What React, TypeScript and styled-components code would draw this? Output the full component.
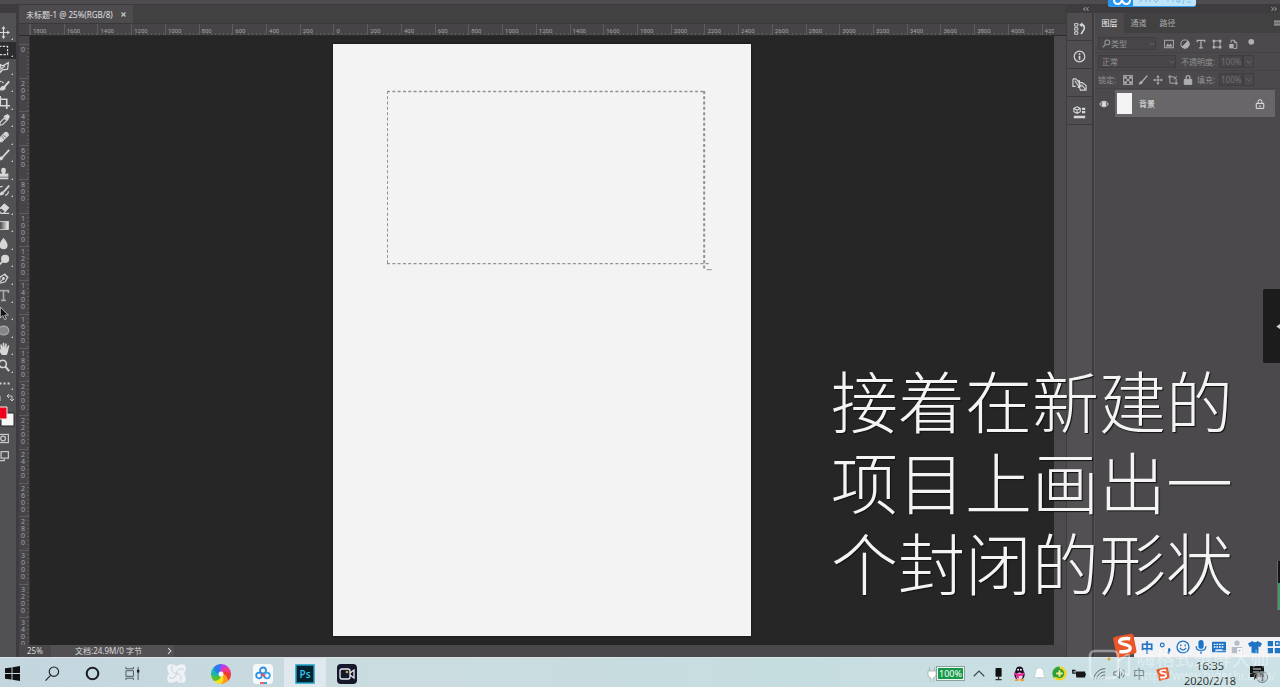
import React from "react";
import styled, { createGlobalStyle } from "styled-components";

const Global = createGlobalStyle`
  * { box-sizing: border-box; }
  html, body { margin: 0; padding: 0; }
  body { overflow: hidden; background: #262626; font-family: "Noto Sans", "Noto Sans CJK SC", sans-serif; }
  button, input, select { font: inherit; color: inherit; margin: 0; padding: 0; border: 0; background: none; }
  svg { display: block; flex: none; }
`;

const Screen = styled.div`
  position: relative;
  display: flex;
  flex-direction: column;
  height: 100vh;
  overflow: hidden;
`;

const TopStrip = styled.header`
  height: 5px;
  flex: none;
  background: #4e4c4f;
  border-bottom: 1px solid #3c3a3c;
`;

const Workspace = styled.main`
  flex: 1;
  min-height: 0;
  display: flex;
  background: #3e3c3e;
`;

/* ---------- tool column ---------- */

const Tools = styled.nav`
  width: 16px;
  flex: none;
  margin-top: 8px;
  padding-top: 11px;
  background: #515052;
  display: flex;
  flex-direction: column;
  overflow: hidden;
`;

const ToolList = styled.div`
  height: 368px;
  display: flex;
  flex-direction: column;
`;

const ToolButton = styled.button<{ $active?: boolean }>`
  position: relative;
  flex: 1;
  min-height: 0;
  width: 16px;
  display: flex;
  align-items: center;
  overflow: hidden;
  color: #d6d6d6;
  background: ${(p) => (p.$active ? "#2c2b2d" : "transparent")};
  svg { margin-left: -3px; }
  &::after {
    content: "";
    position: absolute;
    right: 3px;
    bottom: 2px;
    border-left: 2px solid transparent;
    border-bottom: 2px solid #c8c8c8;
  }
`;

const SmallTool = styled.button`
  height: 18px;
  width: 16px;
  display: flex;
  align-items: center;
  color: #c8c8c8;
  overflow: hidden;
  svg { margin-left: -3px; }
`;

const SwapButton = styled(SmallTool)`
  height: 12px;
  svg { margin-left: 0; }
`;

const Swatches = styled.div`
  height: 25px;
  svg { width: 16px; height: 25px; }
`;

/* ---------- document ---------- */

const Document = styled.section`
  flex: 1;
  min-width: 0;
  margin-left: 3px;
  display: flex;
  flex-direction: column;
  background: #4a484b;
`;

const TabBar = styled.div`
  height: 19px;
  flex: none;
  display: flex;
  background: #424142;
  border-bottom: 1px solid #3a393a;
`;

const DocTab = styled.div`
  width: 114px;
  padding: 1px 6px 0 7px;
  display: flex;
  align-items: center;
  justify-content: space-between;
  background: #4d4b4e;
  color: #e0e0e0;
  font-size: 8px;
  line-height: 18px;
  white-space: nowrap;
`;

const CloseButton = styled.button`
  width: 6px;
  height: 18px;
  color: #c4c4c4;
  display: flex;
  align-items: center;
`;

const RulerRow = styled.div`
  height: 12px;
  flex: none;
  display: flex;
  background: #464447;
  border-bottom: 1px solid #2c2b2c;
`;

const RulerCorner = styled.div`
  width: 11px;
  flex: none;
  border-right: 1px solid #59575a;
`;

const TopRuler = styled.div`
  flex: 1;
  min-width: 0;
  margin-right: 12px;
  display: flex;
  overflow: hidden;
`;

const TopMark = styled.div<{ $last?: boolean }>`
  flex: ${(p) => (p.$last ? 3 : 10)} 1 0;
  min-width: 0;
  overflow: hidden;
  padding-left: 2px;
  border-left: 1px solid #5e5c5f;
  background: repeating-linear-gradient(90deg, transparent 0 3px, #5d5b5e 3px 4px) left bottom / 100% 2px no-repeat;
  color: #a3a2a4;
  font-family: Roboto, "Open Sans", sans-serif;
  font-size: 6px;
  line-height: 13px;
`;

const CanvasRow = styled.div`
  flex: 1;
  min-height: 0;
  display: flex;
`;

const SideRuler = styled.div`
  width: 11px;
  flex: none;
  padding-top: 8px;
  background: #464447;
  border-right: 1px solid #353435;
  display: flex;
  flex-direction: column;
  overflow: hidden;
`;

const SideMark = styled.div<{ $last?: boolean }>`
  flex: ${(p) => (p.$last ? 8 : 10)} 1 0;
  min-height: 0;
  overflow: hidden;
  padding: 1px 0 0 1px;
  border-top: 1px solid #5e5c5f;
  background: repeating-linear-gradient(180deg, transparent 0 3px, #5d5b5e 3px 4px) right top / 2px 100% no-repeat;
  color: #a3a2a4;
  font-size: 7px;
  line-height: 7px;
  span { display: block; width: 6px; text-align: center; }
`;

const Canvas = styled.div`
  flex: 1;
  min-width: 0;
  padding: 8px 0 9px;
  background: #262626;
  display: flex;
  justify-content: center;
`;

const Page = styled.div`
  position: relative;
  height: 100%;
  aspect-ratio: 418 / 592;
  background: #f3f3f3;
  box-shadow: 0 0 2px #0d0d0d;
`;

const Marquee = styled.svg`
  position: absolute;
  left: 13%;
  top: 8%;
  width: 76%;
  height: 29%;
  overflow: visible;
`;

const ScrollTrack = styled.div`
  width: 12px;
  flex: none;
  background: #4c4a4d;
`;

const StatusBar = styled.footer`
  height: 12px;
  flex: none;
  display: flex;
  color: #dadada;
  font-size: 8px;
  line-height: 12px;
  background: #4a484b;
`;

const Zoom = styled.span`
  width: 32px;
  padding-left: 8px;
`;

const DocInfo = styled.span`
  width: 123px;
  padding: 0 1px 0 24px;
  display: flex;
  justify-content: space-between;
  background: #525053;
`;

/* ---------- icon dock ---------- */

const Dock = styled.aside`
  width: 28px;
  flex: none;
  padding: 0 2px 0 1px;
  display: flex;
  flex-direction: column;
`;

const DockHead = styled.div`
  height: 8px;
  flex: none;
  padding-right: 3px;
  display: flex;
  align-items: center;
  justify-content: flex-end;
  color: #c0c0c0;
`;

const DockButton = styled.button`
  height: 28px;
  flex: none;
  padding-top: 3px;
  background: #4f4d50;
  border-bottom: 1px solid #3c3b3d;
  display: flex;
  align-items: center;
  justify-content: center;
  color: #d6d6d6;
`;

const DockFill = styled.div`
  flex: 1;
  background: #525053;
`;

/* ---------- layers panel ---------- */

const Panel = styled.aside`
  width: 186px;
  flex: none;
  display: flex;
  flex-direction: column;
`;

const PanelBody = styled.div`
  flex: 1;
  background: #4b494c;
  border-left: 1px solid #555356;
`;

const PanelTabs = styled.div`
  height: 20px;
  margin-bottom: 2px;
  display: flex;
  align-items: stretch;
  background: #424142;
`;

const PanelTab = styled.button<{ $active?: boolean }>`
  width: 29px;
  font-size: 8px;
  line-height: 18px;
  color: ${(p) => (p.$active ? "#f0f0f0" : "#a9a8aa")};
  background: ${(p) => (p.$active ? "#4b494c" : "transparent")};
`;

const MenuButton = styled.button`
  margin-left: auto;
  width: 6px;
  display: flex;
  align-items: center;
  color: #a5a5a5;
`;

const ControlRow = styled.div`
  height: 18px;
  padding-left: 3px;
  display: flex;
  align-items: center;
  color: #949395;
  font-size: 8px;
  line-height: 12px;
  border-bottom: 1px solid #454346;
`;

const Field = styled.div<{ $width: number; $gap?: number }>`
  width: ${(p) => p.$width}px;
  height: 13px;
  margin-right: ${(p) => p.$gap || 0}px;
  padding-left: 3px;
  display: flex;
  align-items: center;
  background: #474548;
  border: 1px solid #3f3d40;
`;

const Pick = styled.select`
  appearance: none;
  flex: 1;
  min-width: 0;
  height: 11px;
  line-height: 11px;
`;

const FieldLabel = styled.label<{ $width: number }>`
  width: ${(p) => p.$width}px;
  flex: none;
  white-space: nowrap;
`;

const Amount = styled.input`
  width: 24px;
  height: 13px;
  padding-left: 1px;
  color: #727073;
  background: #474548;
  border: 1px solid #3f3d40;
`;

const Step = styled.button`
  width: 11px;
  height: 13px;
  border: 1px solid #3f3d40;
  display: flex;
  align-items: center;
  justify-content: center;
`;

const IconGroup = styled.div<{ $slot: number }>`
  display: flex;
  color: #b0afb1;
  button {
    width: ${(p) => p.$slot}px;
    height: 14px;
    display: flex;
    align-items: center;
    justify-content: center;
  }
`;

const LayerRow = styled.div`
  height: 27px;
  margin-top: 1px;
  padding-right: 5px;
  display: flex;
`;

const EyeButton = styled.button`
  width: 20px;
  padding-right: 2px;
  display: flex;
  align-items: center;
  justify-content: center;
  color: #e0e0e0;
`;

const LayerItem = styled.div`
  flex: 1;
  padding: 0 10px 0 2px;
  display: flex;
  align-items: center;
  background: #686669;
  color: #ececec;
  font-size: 8px;
`;

const Thumb = styled.span`
  width: 15px;
  height: 21px;
  margin-right: 7px;
  background: #f4f4f4;
`;

const LayerName = styled.span`
  flex: 1;
`;

/* ---------- overlays ---------- */

const ShareTag = styled.div`
  position: absolute;
  top: 0;
  right: 84px;
  width: 88px;
  height: 7px;
  display: flex;
  overflow: hidden;
  border-radius: 0 0 3px 3px;
  border-bottom: 1px solid #2f9df0;
  background: #bfe4fa;
  color: #79bdec;
`;

const SideFlap = styled.button`
  position: absolute;
  right: 0;
  top: 289px;
  width: 17px;
  height: 74px;
  border-radius: 2px 0 0 2px;
  background: #1c1c1c;
  color: #d0d0d0;
  display: flex;
  align-items: center;
  justify-content: flex-end;
`;

const LevelMeter = styled.div`
  position: absolute;
  right: 0;
  bottom: 77px;
  width: 3px;
  height: 49px;
  border-left: 1px solid #6c6a6d;
  background: linear-gradient(180deg, #151515 0 45%, #3f9a66 45% 100%);
`;

const Caption = styled.p`
  position: absolute;
  right: 47px;
  top: 358px;
  margin: 0;
  color: #f4f4f4;
  font-family: "Noto Sans CJK SC Light", "Noto Sans CJK SC", sans-serif;
  font-weight: 300;
  font-size: 67px;
  line-height: 81px;
  text-shadow: 1px 1px 1px #111;
  white-space: nowrap;
  span { display: block; }
`;

const ImeBar = styled.div`
  position: absolute;
  right: 0;
  bottom: 30px;
  width: 146px;
  height: 20px;
  padding-left: 4px;
  display: flex;
  overflow: hidden;
  background: #f2f2f4;
  color: #1d74c4;
`;

const ImeKey = styled.button<{ $muted?: boolean }>`
  width: 18px;
  flex: none;
  height: 20px;
  display: flex;
  align-items: center;
  justify-content: center;
  color: ${(p) => (p.$muted ? "#b4bccb" : "inherit")};
  font-family: "Noto Sans CJK SC", sans-serif;
  font-size: 13px;
  font-weight: 700;
  line-height: 20px;
`;

const ImeLogo = styled.div`
  position: absolute;
  right: 143px;
  bottom: 29px;
`;

const Watermark = styled.div`
  position: absolute;
  right: 4px;
  bottom: 5px;
  display: flex;
  align-items: center;
  gap: 6px;
  color: rgba(255, 255, 255, 0.42);
  pointer-events: none;
  p { margin: 0; white-space: nowrap; }
`;

const MarkName = styled.p`
  font-size: 19px;
  line-height: 20px;
`;

const MarkLink = styled.p`
  font-size: 12px;
  line-height: 13px;
`;

/* ---------- taskbar ---------- */

const Taskbar = styled.footer`
  height: 30px;
  flex: none;
  display: flex;
  justify-content: space-between;
  border-top: 1px solid #d9e3e6;
  background: linear-gradient(90deg, #c3d6de 0%, #cbdce0 30%, #c6dde0 60%, #cbe1e6 100%);
  color: #1b1f22;
`;

const Apps = styled.div`
  display: flex;
  margin-left: -8px;
`;

const AppButton = styled.button<{ $width: number; $active?: boolean }>`
  width: ${(p) => p.$width}px;
  padding-top: 2px;
  display: flex;
  align-items: center;
  justify-content: center;
  background: ${(p) => (p.$active ? "#dfe8ec" : "transparent")};
`;

const Tray = styled.div`
  display: flex;
  align-items: center;
  padding-top: 2px;
`;

const TrayButton = styled.button<{ $width?: number }>`
  width: ${(p) => p.$width || 20}px;
  height: 28px;
  display: flex;
  align-items: center;
  justify-content: center;
  color: #3c4548;
  font-size: 12px;
`;

const TrayMode = styled(TrayButton)`
  color: #6f7d82;
`;

const Battery = styled.div`
  width: 42px;
  display: flex;
  align-items: center;
  color: #fff;
`;

const Charge = styled.span`
  width: 27px;
  height: 13px;
  background: #169a4a;
  border: 1px solid #eef6f3;
  outline: 1px solid #8da09c;
  font-size: 9px;
  line-height: 11px;
  text-align: center;
`;

const Clock = styled.time`
  width: 59px;
  padding: 0 0 1px 7px;
  text-align: center;
  font-family: "Open Sans", sans-serif;
  font-size: 11px;
  line-height: 15px;
  white-space: nowrap;
  span { display: block; }
`;

/* ---------- drawings ---------- */

type IconProps = { size?: number; children: React.ReactNode; box?: number; height?: number };
const Icon = ({ size = 12, box = 16, height, children }: IconProps) => (
  <svg width={size} height={height || size} viewBox={`0 0 ${box} ${box}`} fill="none" stroke="currentColor" strokeWidth="1.5" aria-hidden="true">
    {children}
  </svg>
);

const SogouMark = ({ size }: { size: number }) => (
  <svg width={size} height={size} viewBox="0 0 24 24" aria-hidden="true">
    <path d="M1 5.5Q1 4 3 3.5L18 .6Q20 .3 20.500 2L23.500 17Q23.700 19 22 19.600L7 23.400Q5 23.700 4.500 22Z" fill="#e8562a" />
    <path d="M17.500 5.500Q8 4.500 7.200 8.200C6.800 11.500 17.500 10.500 17.500 14.500Q17.500 18.800 7 17.800" fill="none" stroke="#fff" strokeWidth="3.200" />
  </svg>
);

const tools: { name: string; art: React.ReactNode }[] = [
  { name: "移动", art: <><path d="M8 2v12M2 8h12" /><path d="M8 0l2.500 3.500h-5zM8 16l2.500-3.500h-5zM0 8l3.500-2.500v5zM16 8l-3.500-2.500v5z" fill="currentColor" stroke="none" /></> },
  { name: "矩形选框", art: <rect x="-2" y="3" width="15" height="10" strokeDasharray="3 1.500" /> },
  { name: "套索", art: <path d="M1 3l6 3 7-4-1 8-6 1-3 3-1-4zM4 4l1 6 5-4" /> },
  { name: "快速选择", art: <><path d="M15 3L8 11" strokeWidth="2.500" /><path d="M8 9q-3 0-4 4 5 1 6-2z" fill="currentColor" /><path d="M1 5q4-4 7 0" strokeDasharray="2 1" /></> },
  { name: "裁剪", art: <path d="M4 0v12h12M0 4h12v12" strokeWidth="2" /> },
  { name: "吸管", art: <><path d="M3 14l1-4 5-5 3 3-5 5z" /><path d="M9 3l4 4 2-4-2-2z" fill="currentColor" /></> },
  { name: "修复画笔", art: <><path d="M2 10l8-8q3-1 4 3l-8 8q-4 1-4-3z" fill="currentColor" /><path d="M6 7l3 3M8 5l3 3" stroke="#515052" strokeDasharray="1 1" /></> },
  { name: "画笔", art: <><path d="M15 1L7 10" strokeWidth="2.200" /><path d="M6 9q-3 0-5 5 6 1 7-3z" fill="currentColor" stroke="none" /></> },
  { name: "仿制图章", art: <path d="M8 1a3 3 0 0 1 3 3q0 2-1.500 4H14v4H2V8h4.500Q5 6 5 4a3 3 0 0 1 3-3zM2 13h12v2H2z" fill="currentColor" stroke="none" /> },
  { name: "历史画笔", art: <><path d="M15 2L8 10" strokeWidth="2.200" /><path d="M7 9q-3 0-4 5 5 0 6-3z" fill="currentColor" stroke="none" /><path d="M1 8q0-5 6-5M10 14q4-1 4-5" /></> },
  { name: "橡皮擦", art: <><path d="M2 10l7-7 5 4-6 7H5z" /><path d="M5 7l5 4 4-4-5-4z" fill="currentColor" /><path d="M8 14h7" /></> },
  { name: "渐变", art: <><defs><linearGradient id="toolGradient"><stop stopColor="#222" /><stop offset="1" stopColor="#f2f2f2" /></linearGradient></defs><rect x="1" y="3" width="13" height="10" fill="url(#toolGradient)" strokeWidth="1" /></> },
  { name: "模糊", art: <path d="M8 1q5 6 5 9a5 5 0 0 1-10 0q0-3 5-9z" fill="currentColor" stroke="none" /> },
  { name: "减淡", art: <><circle cx="10" cy="6" r="5" fill="currentColor" stroke="none" /><path d="M7 9l-6 6" strokeWidth="2" /></> },
  { name: "钢笔", art: <><path d="M2 14l2-8 5-3 4 4-3 5z" /><path d="M2 14l5-5M9 2l5 5" /><circle cx="8" cy="8" r="1" fill="currentColor" /></> },
  { name: "文字", art: <path d="M2 5V2h12v3M8 2v12M5 14h6" strokeWidth="2" stroke="#a9a8aa" /> },
  { name: "路径选择", art: <path d="M4 0l10 10H9.500l2 4.500-2 1-2.500-5-3 3z" fill="#141414" strokeWidth="1" /> },
  { name: "椭圆", art: <ellipse cx="8" cy="8" rx="6.500" ry="5.500" fill="#858486" stroke="#a9a8aa" /> },
  { name: "抓手", art: <path d="M6 16L2 10Q.5 8 2 7.500q1 0 2.500 2L4 3.500q.8-1.500 2 0L7 7V1.500q1-1.500 2 0V7l1.200-5q1.300-1 1.800.5L11.500 8 13.500 4q1.500-.5 1.500 1L13.500 12 12 16z" fill="currentColor" stroke="none" /> },
  { name: "缩放", art: <><circle cx="7" cy="6" r="4.500" strokeWidth="2" /><path d="M10 9l5 6" strokeWidth="2.500" /></> },
  { name: "更多", art: <path d="M3 8h2.500M8 8h2.500M13 8h2.500" strokeWidth="2.500" /> },
];

const topMarks = [1800, 1600, 1400, 1200, 1000, 800, 600, 400, 200, 0, 200, 400, 600, 800, 1000, 1200, 1400, 1600, 1800, 2000, 2200, 2400, 2600, 2800, 3000, 3200, 3400, 3600, 3800, 4000, 420];
const sideMarks = Array.from({ length: 18 }, (_, i) => String(i * 200));

const Chevron = () => <Icon size={6} box={10}><path d="M1 3l4 4 4-4" stroke="#6b696c" /></Icon>;

const ToolColumn = () => (
  <Tools aria-label="工具">
    <ToolList>
      {tools.map((t, i) => (
        <ToolButton key={t.name} $active={i === 1} aria-label={t.name}><Icon size={13}>{t.art}</Icon></ToolButton>
      ))}
    </ToolList>
    <SwapButton aria-label="切换颜色">
      <svg width="16" height="12" viewBox="0 0 16 12" fill="none" stroke="currentColor"><path d="M0 4v5M8 4h4v5M9 2L7 4l2 2M10 7l2 2 2-2" /></svg>
    </SwapButton>
    <Swatches>
      <svg viewBox="0 0 16 25"><path d="M1 9h13v13H1z" fill="#f7f7f7" stroke="#222" /><path d="M-1 3h8v12h-8z" fill="#f0001c" stroke="#eee" /></svg>
    </Swatches>
    <SmallTool aria-label="快速蒙版"><Icon size={13}><rect x="1" y="3" width="13" height="10" /><circle cx="7.500" cy="8" r="3" /></Icon></SmallTool>
    <SmallTool aria-label="屏幕模式"><Icon size={13}><rect x="5" y="2" width="9" height="8" /><path d="M4 6H1v7h8v-2" /></Icon></SmallTool>
  </Tools>
);

const DocumentArea = () => (
  <Document>
    <TabBar>
      <DocTab>
        <span>未标题-1 @ 25%(RGB/8)</span>
        <CloseButton aria-label="关闭"><Icon size={5} box={10}><path d="M1 1l8 8M9 1L1 9" strokeWidth="2.500" /></Icon></CloseButton>
      </DocTab>
    </TabBar>
    <RulerRow>
      <RulerCorner />
      <TopRuler>
        {topMarks.map((m, i) => <TopMark key={i} $last={i === topMarks.length - 1}>{m}</TopMark>)}
      </TopRuler>
    </RulerRow>
    <CanvasRow>
      <SideRuler>
        {sideMarks.map((m, i) => (
          <SideMark key={m} $last={i === sideMarks.length - 1}>{m.split("").map((d, j) => <span key={j}>{d}</span>)}</SideMark>
        ))}
      </SideRuler>
      <Canvas>
        <Page>
          <Marquee viewBox="0 0 317 172" preserveAspectRatio="none" fill="none" stroke="#929292" aria-hidden="true">
            <path d="M0 .5H317M0 173H322" strokeWidth="1.400" strokeDasharray="3 2.300" />
            <path d="M.5 0V173" strokeDasharray="3 2.300" />
            <path d="M316.500 0V179" strokeWidth="2" strokeDasharray="3 2.300" />
            <path d="M319 179h5" />
          </Marquee>
        </Page>
      </Canvas>
      <ScrollTrack />
    </CanvasRow>
    <StatusBar>
      <Zoom>25%</Zoom>
      <DocInfo><span>文档:24.9M/0 字节</span><Icon size={7} height={12} box={10}><path d="M3 1l4 4-4 4" /></Icon></DocInfo>
    </StatusBar>
  </Document>
);

const IconDock = () => (
  <Dock>
    <DockHead><Icon size={6} box={10}><path d="M4 2L1 5l3 3M9 2L6 5l3 3" /></Icon></DockHead>
    <DockButton aria-label="历史记录"><Icon size={13}><path d="M2 2h4v3H2zM2 7h4v3H2zM2 12h4v3H2z" strokeWidth="1.200" /><path d="M10 3h1.500q3.500 2 2 6L10 15" strokeWidth="2" /><path d="M7.500 3.500l4-3v6z" fill="currentColor" stroke="none" /></Icon></DockButton>
    <DockButton aria-label="信息"><Icon size={13}><circle cx="8" cy="8" r="6.500" /><path d="M8 7v5M8 4v2" strokeWidth="2" /></Icon></DockButton>
    <DockButton aria-label="仿制源"><Icon size={15}><path d="M1 2h3l2 2h2v7H6M1 2v8h3M3 4l5 7M6 4l4 7M8 6h3l4 3v5H9l-1-3zM10 8l4 5" strokeWidth="1.200" /></Icon></DockButton>
    <DockButton aria-label="属性"><Icon size={13}><path d="M5 1l4 2v4L5 9 1 7V3zM1 3l4 2 4-2M5 5v4" strokeWidth="1.300" /><path d="M11 2h4v3h-4zM11 6h4v3h-4zM1 12h14v3H1z" fill="currentColor" stroke="none" /></Icon></DockButton>
    <DockFill />
  </Dock>
);

const LayersPanel = () => (
  <Panel>
    <DockHead><Icon size={6} box={10}><path d="M1 2l3 3-3 3M6 2l3 3-3 3" /></Icon></DockHead>
    <PanelBody>
      <PanelTabs>
        <PanelTab $active>图层</PanelTab>
        <PanelTab>通道</PanelTab>
        <PanelTab>路径</PanelTab>
        <MenuButton aria-label="面板菜单"><Icon size={6} box={10}><path d="M0 2h10M0 5h10M0 8h10" strokeWidth="2" /></Icon></MenuButton>
      </PanelTabs>
      <ControlRow>
        <Field $width={58} $gap={5}>
          <Icon size={9} box={12}><circle cx="7" cy="4.500" r="3.200" /><path d="M5 7l-4 4" /></Icon>
          <Pick aria-label="类型" defaultValue="k"><option value="k">类型</option></Pick>
          <Chevron />
        </Field>
        <IconGroup $slot={16}>
          <button aria-label="像素"><Icon size={10}><rect x="1" y="2" width="14" height="12" /><path d="M3 12l3-5 2 3 3-3 2 5z" fill="currentColor" stroke="none" /></Icon></button>
          <button aria-label="调整"><Icon size={10}><circle cx="8" cy="8" r="6.500" /><path d="M12.600 3.400A6.500 6.500 0 0 1 3.400 12.600z" fill="currentColor" /></Icon></button>
          <button aria-label="文字"><Icon size={10}><path d="M2 5V2h12v3M8 2v12M5 14h6" strokeWidth="2" /></Icon></button>
          <button aria-label="形状"><Icon size={10}><path d="M3 3h10v10H3z" /><path d="M1 1h4v4H1zM11 1h4v4h-4zM1 11h4v4H1zM11 11h4v4h-4z" fill="currentColor" stroke="none" /></Icon></button>
          <button aria-label="智能对象"><Icon size={10}><path d="M5 6V2h5l4 4v9H9M10 2v4h4" /><path d="M2 8h7v7H2z" fill="currentColor" stroke="none" /></Icon></button>
          <button aria-label="开关"><Icon size={12}><circle cx="11" cy="5" r="3.800" fill="currentColor" stroke="none" /></Icon></button>
        </IconGroup>
      </ControlRow>
      <ControlRow>
        <Field $width={78} $gap={5}>
          <Pick aria-label="混合模式" defaultValue="n"><option value="n">正常</option></Pick>
          <Chevron />
        </Field>
        <FieldLabel htmlFor="opacity" $width={38}>不透明度:</FieldLabel>
        <Amount id="opacity" defaultValue="100%" />
        <Step aria-label="不透明度滑块"><Chevron /></Step>
      </ControlRow>
      <ControlRow>
        <FieldLabel as="span" $width={22}>锁定:</FieldLabel>
        <IconGroup $slot={15}>
          <button aria-label="锁定透明像素"><Icon size={10}><rect x="1" y="1" width="14" height="14" /><path d="M2 2h4v4H2zM10 2h4v4h-4zM6 6h4v4H6zM2 10h4v4H2zM10 10h4v4h-4z" fill="currentColor" stroke="none" /></Icon></button>
          <button aria-label="锁定图像像素"><Icon size={10}><path d="M15 1L7 10" strokeWidth="2.200" /><path d="M6 9q-3 0-5 6 6 0 7-4z" fill="currentColor" stroke="none" /></Icon></button>
          <button aria-label="锁定位置"><Icon size={10}>{tools[0].art}</Icon></button>
          <button aria-label="锁定画板"><Icon size={10}><path d="M3 0v13h13M0 3h10l3 3v10M9 7l5-5" /></Icon></button>
          <button aria-label="锁定全部"><Icon size={10}><path d="M2 7h12v8H2z" fill="currentColor" /><path d="M5 7V4q0-3 3-3t3 3v3" strokeWidth="2" /></Icon></button>
        </IconGroup>
        <FieldLabel htmlFor="fill" $width={24}>&nbsp;填充:</FieldLabel>
        <Amount id="fill" defaultValue="100%" />
        <Step aria-label="填充滑块"><Chevron /></Step>
      </ControlRow>
      <LayerRow>
        <EyeButton aria-label="可见性"><Icon size={10}><path d="M1 8q7-9 14 0-7 9-14 0z" /><circle cx="8" cy="8" r="3" fill="currentColor" /></Icon></EyeButton>
        <LayerItem>
          <Thumb />
          <LayerName>背景</LayerName>
          <Icon size={10}><path d="M2 7h12v8H2z" /><path d="M5 7V4q0-3 3-3t3 3v3M8 10v3" /></Icon>
        </LayerItem>
      </LayerRow>
    </PanelBody>
  </Panel>
);

const ImeStrip = () => (
  <>
    <ImeBar>
      <ImeKey>中</ImeKey>
      <ImeKey aria-label="标点"><Icon size={13}><circle cx="4" cy="5" r="2.300" /><path d="M12 9q2 3-1 6" strokeWidth="2.500" /></Icon></ImeKey>
      <ImeKey aria-label="表情"><Icon size={14}><circle cx="8" cy="8" r="6.800" /><path d="M4.500 9q3.500 5 7 0M5.500 5v2M10.500 5v2" /></Icon></ImeKey>
      <ImeKey aria-label="语音"><Icon size={14}><rect x="5" y="0" width="6" height="10" rx="3" fill="currentColor" stroke="none" /><path d="M2.500 7q0 5 5.500 5t5.500-5M8 12v4" /></Icon></ImeKey>
      <ImeKey aria-label="键盘"><Icon size={14}><rect x="0" y="2" width="16" height="12" rx="1" fill="currentColor" stroke="none" /><path d="M2 5h12M2 8h12" stroke="#fff" strokeDasharray="2 1" /><path d="M4 11.500h8" stroke="#fff" /></Icon></ImeKey>
      <ImeKey $muted aria-label="个人中心"><Icon size={14}><circle cx="8" cy="3.500" r="3" fill="currentColor" stroke="none" /><path d="M2 15V8h12v7z" fill="currentColor" stroke="none" /><path d="M9 10h4v4H9z" stroke="#fff" /></Icon></ImeKey>
      <ImeKey aria-label="皮肤"><Icon size={14}><path d="M5 1q3 3 6 0l5 3-2 4-2-1v8H4V7L2 8 0 4z" fill="currentColor" stroke="none" /></Icon></ImeKey>
      <ImeKey aria-label="工具箱"><Icon size={14}><path d="M2 1h6v6H2zM2 9h6v6H2zM10 9h6v6h-6z" fill="currentColor" stroke="none" /><path d="M11 2h4v4h-4z" /></Icon></ImeKey>
    </ImeBar>
    <ImeLogo><SogouMark size={25} /></ImeLogo>
  </>
);

const wheel = ["#b43ff0", "#ef3b8c", "#f03a2c", "#ff9b1c", "#f8e01c", "#52c12e", "#18b6b0", "#2e78f0"];

const TaskbarRow = () => (
  <Taskbar>
    <Apps>
      <AppButton $width={40} aria-label="开始"><Icon size={15}><path d="M0 2.500l7-1v6H0zM8 1.300L16 0v7.500H8zM0 8.500h7v6l-7-1zM8 8.500h8V16l-8-1.300z" fill="#111" stroke="none" /></Icon></AppButton>
      <AppButton $width={40} aria-label="搜索"><Icon size={15}><circle cx="9.500" cy="6" r="5" strokeWidth="1.200" /><path d="M6 10l-5.500 5.500" strokeWidth="1.200" /></Icon></AppButton>
      <AppButton $width={40} aria-label="Cortana"><Icon size={15}><circle cx="8" cy="8" r="6.200" strokeWidth="2.200" /></Icon></AppButton>
      <AppButton $width={40} aria-label="任务视图"><Icon size={15}><path d="M1 1v2h8V1M1 15v-2h8v2M1 5h8v6H1zM14 1v14" strokeWidth="1" stroke="#4a5357" /><path d="M14 4v3" strokeWidth="2.500" /></Icon></AppButton>
      <AppButton $width={48} aria-label="四叶">
        <svg width="19" height="19" viewBox="0 0 18 18" fill="#eef2f6"><path d="M1 1Q5-1 9 2q4-3 8-1 2 4-1 8 3 4 1 8-4 2-8-1-4 3-8 1-2-4 1-8-3-4-1-8z" /><path d="M9 9Q3 8 5 2M9 9q1-6 7-4M9 9q6 1 4 7M9 9q-1 6-7 4" fill="none" stroke="#c3ced8" strokeWidth=".9" /></svg>
      </AppButton>
      <AppButton $width={42} aria-label="浏览器">
        <svg width="20" height="20" viewBox="-10 -10 20 20">
          {wheel.map((c, i) => <path key={c} d="M0 0Q-5 -4 0 -10A10 10 0 0 1 7.300 -6.900Q2 -5 0 0Z" fill={c} transform={`rotate(${i * 45})`} />)}
          <circle r="2.500" fill="#f6f6f6" />
        </svg>
      </AppButton>
      <AppButton $width={42} aria-label="百度网盘">
        <svg width="20" height="20" viewBox="0 0 20 20" fill="none" strokeWidth="1.800"><rect width="20" height="20" rx="4" fill="#f7f8fa" /><circle cx="10" cy="6.500" r="3" stroke="#2b8fe8" /><circle cx="6" cy="11.500" r="2.800" stroke="#2b8fe8" /><circle cx="14" cy="11.500" r="2.800" stroke="#35a3ee" /><path d="M8 10q2 0 4 3" stroke="#e8505a" /><path d="M7 19h4" stroke="#e8505a" /><path d="M11 19h3" stroke="#2b8fe8" /></svg>
      </AppButton>
      <AppButton $width={42} $active aria-label="Photoshop">
        <svg width="20" height="20" viewBox="0 0 20 20"><rect x="1" y="1" width="18" height="18" fill="#04222e" stroke="#1a9fc4" strokeWidth="1.500" /><text x="10" y="13.500" textAnchor="middle" fontFamily="Open Sans, sans-serif" fontSize="10" fontWeight="600" fill="#35c5ee">Ps</text></svg>
      </AppButton>
      <AppButton $width={42} aria-label="录屏">
        <svg width="20" height="20" viewBox="0 0 20 20" fill="none" stroke="#e9e9f2" strokeWidth="1.300"><rect width="20" height="20" rx="4" fill="#15172a" stroke="none" /><rect x="3" y="5" width="10" height="10" rx="2" /><path d="M13 9l4-3v8l-4-3" /><circle cx="10" cy="8" r=".7" stroke="#d8a93a" /></svg>
      </AppButton>
    </Apps>
    <Tray>
      <Battery>
        <svg width="10" height="16" viewBox="0 0 10 16" fill="#fff" stroke="#98a6a8" strokeWidth=".7"><path d="M2.500 1v4M7.500 1v4M1 5h8v4q-1 3-3 3v4H4v-4q-2 0-3-3z" /></svg>
        <Charge>100%</Charge>
      </Battery>
      <TrayButton aria-label="显示隐藏图标"><Icon size={12}><path d="M1 11l7-7 7 7" /></Icon></TrayButton>
      <TrayButton aria-label="麦克风"><Icon size={14}><rect x="4" y="1" width="7" height="10" rx="1" fill="#111" stroke="none" /><path d="M7.500 11v3M4 14.500h7" stroke="#333" /></Icon></TrayButton>
      <TrayButton aria-label="QQ"><Icon size={15}><ellipse cx="8" cy="9" rx="5.500" ry="6" fill="#1a1020" stroke="none" /><circle cx="8" cy="4.500" r="4" fill="#1a1020" stroke="none" /><ellipse cx="8" cy="11" rx="3.300" ry="4" fill="#f6c8e4" stroke="none" /><path d="M3 8q5 3 10 0M6 9v4" stroke="#e32a9a" strokeWidth="2.500" /><path d="M3 15h4M9 15h4" stroke="#f0a020" strokeWidth="2" /><circle cx="6.500" cy="4" r="1" fill="#fff" stroke="none" /><circle cx="9.500" cy="4" r="1" fill="#fff" stroke="none" /></Icon></TrayButton>
      <TrayButton aria-label="通知"><Icon size={13}><path d="M1 13q2-2 2-7 1-5 5-5t5 5q0 5 2 7zM6 14h4" fill="#fff" stroke="#b4c4c8" strokeWidth=".8" /></Icon></TrayButton>
      <TrayButton aria-label="安全卫士"><Icon size={15}><circle cx="8" cy="8" r="7.500" fill="#f2d51c" stroke="none" /><path d="M8 .5A7.500 7.500 0 0 0 2 12.500L9 9z" fill="#2ba540" stroke="none" /><circle cx="8" cy="8" r="5" fill="#2b9a3a" stroke="none" /><path d="M8 4.500v7M4.500 8h7" stroke="#f7f08a" strokeWidth="2" /></Icon></TrayButton>
      <TrayButton aria-label="电源"><Icon size={14}><path d="M4 5h11v7H5z" fill="#161616" stroke="none" /><path d="M1 3v4h3M0 4h4M15 7v3" stroke="#161616" /></Icon></TrayButton>
      <TrayButton aria-label="网络"><Icon size={13}><path d="M1 15A14 14 0 0 1 15 2M4.500 15A10 10 0 0 1 15 6M8 15a7 7 0 0 1 7-5M11.500 15q1-2 3.500-2" strokeWidth="1.200" stroke="#5b666a" /></Icon></TrayButton>
      <TrayButton aria-label="音量"><Icon size={13}><path d="M1 6h3l4-4v12l-4-4H1zM10 5q2 3 0 6M12 3q4 5 0 10" strokeWidth="1" stroke="#5b666a" /></Icon></TrayButton>
      <TrayMode>中</TrayMode>
      <TrayButton $width={28} aria-label="搜狗输入法"><SogouMark size={14} /></TrayButton>
      <Clock><span>16:35</span><span>2020/2/18</span></Clock>
      <TrayButton $width={44} aria-label="通知中心">
        <svg width="20" height="20" viewBox="0 0 20 20"><path d="M2 2h14v11H9l-3 3v-3H2z" fill="#141414" /><path d="M5 5h8M5 8h6" stroke="#cfe0e4" /><circle cx="14" cy="13" r="5.500" fill="#b6c3c7" fillOpacity=".7" stroke="#77858a" /><text x="14" y="17" textAnchor="middle" fontFamily="Open Sans, sans-serif" fontSize="10" fill="#161616">1</text></svg>
      </TrayButton>
    </Tray>
  </Taskbar>
);

export default function App() {
  return (
    <Screen>
      <Global />
      <TopStrip />
      <Workspace>
        <ToolColumn />
        <DocumentArea />
        <IconDock />
        <LayersPanel />
      </Workspace>
      <TaskbarRow />
      <ShareTag>
        <svg width="88" height="7" viewBox="0 0 88 7" fill="none"><path d="M0 0h25v7H0z" fill="#2496ef" /><path d="M6 0q0 4 4 4 3 0 4-4 1 4 4 4 4 0 4-4" stroke="#fff" strokeWidth="2" /><path d="M31 2l3-2M38 0v2M42 0v2M46 0q2 4 4 0M60 0v2M64 0l2 2M69 0v2h3V0M76 0l-1 4M79 2h4" stroke="currentColor" /></svg>
      </ShareTag>
      <SideFlap aria-label="展开"><Icon size={5} box={8}><path d="M8 0L2 4l6 4z" fill="currentColor" stroke="none" /></Icon></SideFlap>
      <LevelMeter />
      <Caption><span>接着在新建的</span><span>项目上画出一</span><span>个封闭的形状</span></Caption>
      <ImeStrip />
      <Watermark>
        <svg width="43" height="34" viewBox="0 0 43 34" fill="none" stroke="currentColor" strokeWidth="2.500"><rect x="2" y="3" width="28" height="27" rx="5" /><path d="M30 13l9-6q2-1 2 2v16q0 3-2 2l-9-6" /><circle cx="21" cy="11" r="1.500" fill="#d9a520" stroke="none" /></svg>
        <div>
          <MarkName>嗨格式录屏大师</MarkName>
          <MarkLink>http://www.higeshi.com/</MarkLink>
        </div>
      </Watermark>
    </Screen>
  );
}
